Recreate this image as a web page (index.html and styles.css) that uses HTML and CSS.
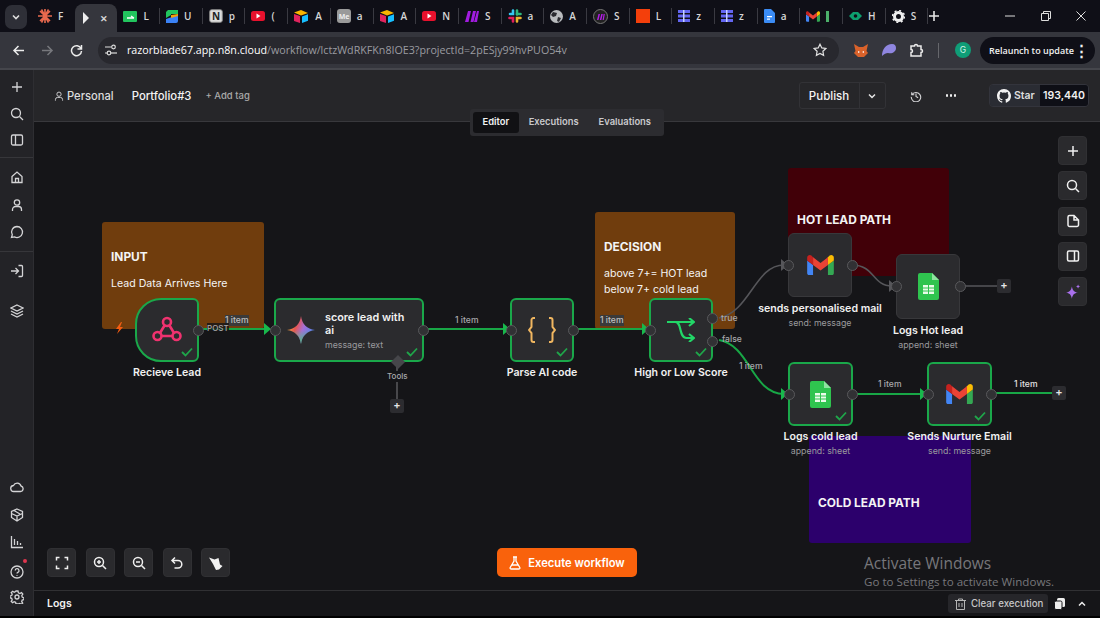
FILE: index.html
```html
<!DOCTYPE html>
<html lang="en">
<head>
  <meta charset="UTF-8" />
  <title>Portfolio#3 - n8n</title>
  <link rel="stylesheet" href="styles.css">
</head>
<body>
  <svg class="defs" width="0" height="0">
    <defs>
      <g id="gmail">
        <path fill="#4285F4" d="M1.6 18H5.3V9L0 5v11.4C0 17.3.7 18 1.6 18z"/>
        <path fill="#34A853" d="M18.7 18h3.7c.9 0 1.6-.7 1.6-1.6V5l-5.3 4z"/>
        <path fill="#FBBC04" d="M18.7 2.1V9L24 5V2.4c0-2-2.3-3.1-3.8-1.9z"/>
        <path fill="#EA4335" d="M5.3 9V2.1L12 7.1l6.7-5V9L12 14z"/>
        <path fill="#C5221F" d="M0 2.4V5l5.3 4V2.1L3.8.5C2.3-.7 0 .4 0 2.4z"/>
      </g>
      <g id="sheets">
        <path fill="#2fc44f" d="M2 0h12l7 7v18a2 2 0 0 1-2 2H2a2 2 0 0 1-2-2V2a2 2 0 0 1 2-2z"/>
        <path fill="#8fe3a0" d="M14 0l7 7h-7z"/>
        <path fill="#e9fbe9" d="M5 12h11v9H5z"/>
        <path stroke="#2fc44f" stroke-width="1" d="M5 15h11M5 18h11M10.5 12v9"/>
      </g>
      <path id="check" d="M1 5l3.5 3.5L11 1.5" fill="none" stroke="#1fa64a" stroke-width="1.8"/>
    </defs>
  </svg>

  <div class="tabstrip">
    <div class="tabs-menu">
      <svg width="10" height="10" viewBox="0 0 10 10"><path d="M2 3.5l3 3 3-3" fill="none" stroke="#ddd" stroke-width="1.6"/></svg>
    </div>
    <div class="tab">
      <svg width="14" height="14" viewBox="0 0 14 14"><g stroke="#e8694e" stroke-width="1.6"><path d="M7 0v14M0 7h14M2 2l10 10M12 2L2 12M3.5 0.5l7 13M10.5 .5l-7 13"/></g></svg>
      <span>F</span>
    </div>
    <div class="tab tab-active">
      <svg width="9" height="12" viewBox="0 0 9 12"><path d="M1 0v12l6-6z" fill="#eee"/></svg>
      <span class="tab-x">✕</span>
    </div>
    <div class="tab">
      <svg width="14" height="11" viewBox="0 0 14 11"><rect width="14" height="11" rx="1" fill="#22c55e"/><path d="M4 7h7M8 5l3 2" stroke="#fff" stroke-width="1.3" fill="none"/></svg>
      <span>L</span>
    </div>
    <div class="tab">
      <svg width="12" height="13" viewBox="0 0 12 13"><path d="M2 0h10v4H5v1L0 8V2z" fill="#22c55e"/><path d="M0 9l12-4v6a2 2 0 0 1-2 2H0z" fill="#3b82f6"/><path d="M5 5l7-1v2l-7 2z" fill="#f59e0b"/></svg>
      <span>U</span>
    </div>
    <div class="tab">
      <svg width="14" height="14" viewBox="0 0 14 14"><rect x=".7" y=".7" width="12.6" height="12.6" rx="2" fill="#ddd" stroke="#888"/><text x="7" y="11" class="fav-text">N</text></svg>
      <span>p</span>
    </div>
    <div class="tab">
      <svg width="14" height="10" viewBox="0 0 14 10"><rect width="14" height="10" rx="2.5" fill="#e8112d"/><path d="M5.5 2.5v5l4-2.5z" fill="#fff"/></svg>
      <span>(</span>
    </div>
    <div class="tab">
      <svg width="15" height="13" viewBox="0 0 15 13"><path d="M7 0l7 3-7 2.500-7-3z" fill="#f8b500"/><path d="M8 6.500l6-2.300v6.500l-6 2.300z" fill="#18bfff"/><path d="M0 4v7l6 2V6z" fill="#e0245e"/></svg>
      <span>A</span>
    </div>
    <div class="tab">
      <svg width="14" height="14" viewBox="0 0 14 14"><rect width="14" height="14" rx="3" fill="#9a9a9a"/><text x="7" y="10" class="fav-text fav-me">Me</text></svg>
      <span>a</span>
    </div>
    <div class="tab">
      <svg width="15" height="13" viewBox="0 0 15 13"><path d="M7 0l7 3-7 2.500-7-3z" fill="#f8b500"/><path d="M8 6.500l6-2.300v6.500l-6 2.300z" fill="#18bfff"/><path d="M0 4v7l6 2V6z" fill="#e0245e"/></svg>
      <span>A</span>
    </div>
    <div class="tab">
      <svg width="14" height="10" viewBox="0 0 14 10"><rect width="14" height="10" rx="2.500" fill="#e8112d"/><path d="M5.500 2.500v5l4-2.500z" fill="#fff"/></svg>
      <span>N</span>
    </div>
    <div class="tab">
      <svg width="14" height="11" viewBox="0 0 14 11"><path d="M3 0h3L3.500 11H0zM8 0h3L8.500 11h-3zM12 0h2l-2 11h-3z" fill="#a21ce0"/></svg>
      <span>S</span>
    </div>
    <div class="tab">
      <svg width="14" height="14" viewBox="0 0 14 14"><g stroke-width="2.600" stroke-linecap="round"><path d="M5 1.500v3.500H2" stroke="#36c5f0" fill="none"/><path d="M9 1.500v4" stroke="#2eb67d"/><path d="M12.500 5H9" stroke="#2eb67d"/><path d="M9 12.500V9h3.500" stroke="#ecb22e" fill="none"/><path d="M1.500 9H5v3.500" stroke="#e01e5a" fill="none"/></g></svg>
      <span>a</span>
    </div>
    <div class="tab">
      <svg width="13" height="13" viewBox="0 0 13 13"><circle cx="6.500" cy="6.500" r="6.500" fill="#b9bbbe"/><path d="M3 2l4 1-1 3-3 1-2-2zM8 7l3 1-2 4-2-1z" fill="#2a2a30"/></svg>
      <span>A</span>
    </div>
    <div class="tab">
      <svg width="15" height="15" viewBox="0 0 15 15"><circle cx="7.500" cy="7.500" r="7" fill="#222" stroke="#777"/><path d="M4 11l1.500-6h1.500l-1.500 6zM6.800 11l1.500-6h1.500l-1.500 6zM9.600 11l1-6h1.200l-1 6z" fill="#b31ce8"/></svg>
      <span>S</span>
    </div>
    <div class="tab">
      <svg width="14" height="14" viewBox="0 0 14 14"><rect width="14" height="14" fill="#f43f0b"/></svg>
      <span>L</span>
    </div>
    <div class="tab">
      <svg width="12" height="12" viewBox="0 0 12 12"><g fill="#6366f1"><rect width="12" height="3"/><rect y="4.500" width="12" height="3"/><rect y="9" width="12" height="3"/></g><path d="M5 0h1.500v12H5z" fill="#c7d2fe"/></svg>
      <span>z</span>
    </div>
    <div class="tab">
      <svg width="12" height="12" viewBox="0 0 12 12"><g fill="#6366f1"><rect width="12" height="3"/><rect y="4.500" width="12" height="3"/><rect y="9" width="12" height="3"/></g><path d="M5 0h1.500v12H5z" fill="#c7d2fe"/></svg>
      <span>z</span>
    </div>
    <div class="tab">
      <svg width="11" height="14" viewBox="0 0 11 14"><path d="M1 0h6l4 4v9a1 1 0 0 1-1 1H1a1 1 0 0 1-1-1V1a1 1 0 0 1 1-1z" fill="#3b8cf5"/><path d="M3 7h5v1.300H3zM3 9.500h3v1.300H3z" fill="#fff"/></svg>
      <span>a</span>
    </div>
    <div class="tab">
      <svg width="14" height="11" viewBox="0 0 24 18"><use href="#gmail"/></svg>
      <span class="tab-bar"></span>
    </div>
    <div class="tab">
      <svg width="13" height="10" viewBox="0 0 13 10"><path d="M0 5l4-4h5l4 4-4 4H4z" fill="#0d9f6e"/><circle cx="6.500" cy="5" r="1.800" fill="#0f0f17"/></svg>
      <span>H</span>
    </div>
    <div class="tab tab-last">
      <svg width="13" height="13" viewBox="0 0 13 13"><circle cx="6.500" cy="6.500" r="4" fill="none" stroke="#eee" stroke-width="3"/><circle cx="6.500" cy="6.500" r="6" fill="none" stroke="#eee" stroke-width="1.500" stroke-dasharray="2 2.700"/></svg>
      <span>S</span>
    </div>
    <div class="tab-new">
      <svg width="12" height="12" viewBox="0 0 12 12"><path d="M6 1v10M1 6h10" stroke="#e6e6e6" stroke-width="1.600"/></svg>
    </div>
    <div class="window-controls">
      <svg width="10" height="10" viewBox="0 0 10 10"><path d="M0 5h10" stroke="#ddd"/></svg>
      <svg width="10" height="10" viewBox="0 0 10 10"><path d="M.5 2.500h7v7h-7zM2.500 2.500v-2h7v7h-2" fill="none" stroke="#ddd"/></svg>
      <svg width="10" height="10" viewBox="0 0 10 10"><path d="M.5.500l9 9M9.500.500l-9 9" stroke="#ddd"/></svg>
    </div>
  </div>

  <div class="toolbar">
    <div class="nav-icons">
      <svg width="13" height="13" viewBox="0 0 13 13"><path d="M12 6.500H2M6.500 2l-4.500 4.500 4.500 4.500" fill="none" stroke="#ececec" stroke-width="1.500"/></svg>
      <svg width="13" height="13" viewBox="0 0 13 13"><path d="M1 6.500h10M6.500 2l4.500 4.500L6.500 11" fill="none" stroke="#77787d" stroke-width="1.500"/></svg>
      <svg width="13" height="13" viewBox="0 0 13 13"><path d="M11 4.500A5 5 0 1 0 11.500 7M11.500 1v4h-4" fill="none" stroke="#ececec" stroke-width="1.500"/></svg>
    </div>
    <div class="address-bar">
      <svg width="12" height="12" viewBox="0 0 12 12"><g fill="none" stroke="#ddd" stroke-width="1.200"><path d="M0 3h6M0 9h2"/><circle cx="8.500" cy="3" r="1.800"/><circle cx="4" cy="9" r="1.800"/><path d="M6 9h6"/></g></svg>
      <span class="url"><b>razorblade67.app.n8n.cloud</b>/workflow/lctzWdRKFKn8IOE3?projectId=2pESjy99hvPUO54v</span>
      <svg class="star" width="14" height="14" viewBox="0 0 14 14"><path d="M7 1.200l1.800 3.700 4 .6-2.900 2.800.7 4L7 10.400l-3.600 1.900.7-4L1.200 5.500l4-.6z" fill="none" stroke="#e2e2e2" stroke-width="1.200"/></svg>
    </div>
    <div class="extensions">
      <svg width="14" height="13" viewBox="0 0 14 13"><path d="M0 0l5 3h4l5-3-1.500 7L14 9l-4 4H4L0 9l1.500-2z" fill="#d9622b"/><path d="M4 7l2 1-2 1zM10 7L8 8l2 1z" fill="#fff"/></svg>
      <svg width="14" height="12" viewBox="0 0 14 12"><path d="M0 12C0 5 4 0 10 0c3 0 4 2 4 4 0 4-4 6-8 5-2 0-4 1-6 3z" fill="#8f86e0"/></svg>
      <svg width="14" height="14" viewBox="0 0 14 14"><path d="M1 3h3.500a1.500 1.500 0 0 1 3 0H11v3.500a1.500 1.500 0 0 1 0 3V13H1V9.500a1.500 1.500 0 0 0 0-3z" fill="none" stroke="#ececec" stroke-width="1.500"/></svg>
      <span class="ext-divider"></span>
      <span class="avatar">G</span>
    </div>
    <div class="relaunch">Relaunch to update<span class="relaunch-dots">⋮</span></div>
  </div>

  <div class="app">
    <nav class="sidebar">
      <div class="side-group">
        <svg width="14" height="14" viewBox="0 0 14 14"><path class="ic" d="M7 2v10M2 7h10"/></svg>
        <svg width="14" height="14" viewBox="0 0 14 14"><circle class="ic" cx="6" cy="6" r="4.500"/><path class="ic" d="M9.500 9.500L13 13"/></svg>
        <svg width="14" height="14" viewBox="0 0 14 14"><rect class="ic" x="1.500" y="2" width="11" height="10" rx="1.500"/><path class="ic" d="M5.500 2v10"/></svg>
      </div>
      <div class="side-group side-line">
        <svg width="14" height="14" viewBox="0 0 14 14"><path class="ic" d="M2 6.500L7 2l5 4.500V12.500H2zM5.500 12.500V8.500h3v4"/></svg>
        <svg width="14" height="14" viewBox="0 0 14 14"><circle class="ic" cx="7" cy="4.500" r="2.700"/><path class="ic" d="M2.500 13v-1.500a3 3 0 0 1 3-3h3a3 3 0 0 1 3 3V13"/></svg>
        <svg width="14" height="14" viewBox="0 0 14 14"><path class="ic" d="M7 1.500a5.500 5.500 0 1 1-2.500 10.400L1.500 12.500l.8-2.800A5.500 5.500 0 0 1 7 1.500z"/></svg>
      </div>
      <div class="side-group side-line side-tight">
        <svg width="14" height="14" viewBox="0 0 14 14"><path class="ic" d="M1 7h7M5.500 4l3 3-3 3M8.500 1.500h3a1 1 0 0 1 1 1v9a1 1 0 0 1-1 1h-3"/></svg>
      </div>
      <div class="side-group side-layers">
        <svg width="14" height="14" viewBox="0 0 14 14"><path class="ic" d="M7 1l6 3-6 3-6-3zM1 7l6 3 6-3M1 10l6 3 6-3"/></svg>
      </div>
      <div class="side-group side-bottom">
        <svg width="14" height="14" viewBox="0 0 14 14"><path class="ic" d="M4 11.500a3 3 0 0 1-.5-6 4 4 0 0 1 7.500.5 2.800 2.800 0 0 1-.5 5.500z"/></svg>
        <svg width="14" height="14" viewBox="0 0 14 14"><path class="ic" d="M7 1l5.500 2.500v6L7 13 1.500 9.500v-6zM1.500 5.500L7 8l5.500-2.500M7 8v5M4 2.500L10 6"/></svg>
        <svg width="14" height="14" viewBox="0 0 14 14"><path class="ic" d="M1.500 1v11.500H13M4.500 10V4M7.500 10V6M10.500 10V8"/></svg>
        <div class="help">
          <svg width="14" height="14" viewBox="0 0 14 14"><circle class="ic" cx="7" cy="7" r="6"/><path class="ic" d="M5.200 5.500a1.900 1.900 0 1 1 2.700 1.800c-.6.300-.9.700-.9 1.300M7 10v.8"/></svg>
          <span class="help-dot"></span>
        </div>
        <svg width="14" height="14" viewBox="0 0 14 14"><circle class="ic" cx="7" cy="7" r="2"/><path class="ic" d="M6 1h2l.4 1.800 1.500.7 1.600-.9 1.300 1.500-1 1.500.4 1.500 1.700.7v1.800l-1.700.5-.5 1.500 1 1.500-1.500 1.300-1.500-1-1.500.6L8 14H6l-.4-1.700-1.500-.6-1.500 1L1.200 11.300l1-1.500-.5-1.500L0 7.700V6l1.700-.5.500-1.500-1-1.500L2.700 1.200l1.500 1 1.400-.6z"/></svg>
      </div>
    </nav>

    <main class="workspace">
      <header class="topbar">
        <div class="crumbs">
          <svg width="10" height="10" viewBox="0 0 14 14"><circle class="ic" cx="7" cy="4.500" r="3"/><path class="ic" d="M2 13.500v-1.500a3 3 0 0 1 3-3h4a3 3 0 0 1 3 3v1.500"/></svg>
          <span class="crumb-project">Personal</span>
          <span class="crumb-name">Portfolio#3</span>
          <span class="add-tag">+ Add tag</span>
        </div>
        <div class="top-actions">
          <div class="publish">
            <span class="publish-label">Publish</span>
            <span class="publish-more"><svg width="10" height="10" viewBox="0 0 10 10"><path d="M2 3.500l3 3 3-3" fill="none" stroke="#e6e6e6" stroke-width="1.500"/></svg></span>
          </div>
          <svg class="history" width="12" height="12" viewBox="0 0 14 14"><path class="ic" d="M2 2.500v3h3M2.300 5.500A5.500 5.500 0 1 1 1.500 8M7 4v3.500l2.500 1.500"/></svg>
          <span class="more-dots"><i></i><i></i><i></i></span>
          <div class="github">
            <span class="github-star">
              <svg width="14" height="14" viewBox="0 0 16 16"><path fill="#f2f2f2" d="M8 0C3.580 0 0 3.580 0 8c0 3.540 2.290 6.530 5.470 7.590.4.070.55-.17.55-.38v-1.340c-2.230.48-2.700-1.070-2.700-1.070-.36-.92-.89-1.170-.89-1.170-.73-.5.050-.49.050-.49.800.06 1.230.82 1.230.82.720 1.220 1.870.87 2.320.67.070-.52.280-.87.510-1.070-1.780-.2-3.640-.89-3.640-3.950 0-.87.310-1.590.820-2.150-.08-.2-.36-1.020.080-2.120 0 0 .67-.21 2.200.82a7.700 7.700 0 0 1 4 0c1.530-1.040 2.200-.82 2.200-.82.440 1.100.160 1.920.080 2.120.51.560.82 1.270.82 2.150 0 3.070-1.870 3.750-3.650 3.950.29.250.54.730.54 1.480v2.190c0 .21.150.46.550.38A8 8 0 0 0 16 8c0-4.420-3.580-8-8-8z"/></svg>
              Star
            </span>
            <span class="github-count">193,440</span>
          </div>
        </div>
      </header>

      <div class="canvas">
        <div class="view-tabs">
          <span class="view-tab view-tab-on">Editor</span>
          <span class="view-tab">Executions</span>
          <span class="view-tab">Evaluations</span>
        </div>

        <div class="sticky sticky-input">
          <h4>INPUT</h4>
          <p>Lead Data Arrives Here</p>
        </div>
        <div class="sticky sticky-decision">
          <h4>DECISION</h4>
          <p>above 7+= HOT lead<br>below 7+ cold lead</p>
        </div>
        <div class="sticky sticky-hot"><h4>HOT LEAD PATH</h4></div>
        <div class="sticky sticky-cold"><h4>COLD LEAD PATH</h4></div>

        <svg class="edges" viewBox="34 122 1066 468">
          <g class="edge-green">
            <path d="M199 329H266"/>
            <path d="M424 329H506"/>
            <path d="M573 329H645"/>
            <path d="M719 340C750 345 752 394 784 394"/>
            <path d="M853 394H923"/>
            <path d="M992 393H1052"/>
          </g>
          <g class="edge-grey">
            <path d="M719 318C750 312 755 265 784 265"/>
            <path d="M852 265C875 265 872 286 892 286"/>
            <path d="M960 286H998"/>
            <path d="M397 361V400"/>
          </g>
          <g class="arrow-green">
            <path d="M264 323l7 6-7 6z"/>
            <path d="M503 323l7 6-7 6z"/>
            <path d="M642 323l7 6-7 6z"/>
            <path d="M781 388l7 6-7 6z"/>
            <path d="M920 388l7 6-7 6z"/>
          </g>
          <g class="arrow-grey">
            <path d="M781 259l7 6-7 6z"/>
            <path d="M889 280l7 6-7 6z"/>
          </g>
          <path class="bolt" d="M121 322l-5 7h3l-2 5 6-7h-3l2-5z"/>
        </svg>

        <span class="edge-label label-a">1 item</span>
        <span class="edge-label edge-post">POST</span>
        <span class="edge-label label-b">1 item</span>
        <span class="edge-label label-c">1 item</span>
        <span class="edge-label edge-true">true</span>
        <span class="edge-label edge-false">false</span>
        <span class="edge-label label-d">1 item</span>
        <span class="edge-label label-e">1 item</span>
        <span class="edge-label label-f">1 item</span>
        <span class="edge-label edge-tools">Tools</span>

        <div class="node node-webhook ok">
          <svg width="30" height="30" viewBox="0 0 30 30"><g fill="none" stroke="#f0326f" stroke-width="2.600" stroke-linecap="round"><circle cx="15" cy="7" r="4"/><circle cx="5.500" cy="21" r="4"/><circle cx="24.500" cy="21" r="4"/><path d="M12.500 10.500L8 18M17.500 10.500L22 18M10 21h10"/></g></svg>
          <svg class="tick" width="12" height="10" viewBox="0 0 12 10"><use href="#check"/></svg>
          <div class="node-label"><b>Recieve Lead</b></div>
          <span class="handle handle-out"></span>
        </div>

        <div class="node node-score ok">
          <svg class="gemini" width="28" height="28" viewBox="0 0 28 28">
            <defs>
              <linearGradient id="gem" x1="0" y1="0.300" x2="1" y2="0.700">
                <stop offset="0" stop-color="#f5c33b"/>
                <stop offset="0.300" stop-color="#e8554e"/>
                <stop offset="0.550" stop-color="#a56fd6"/>
                <stop offset="1" stop-color="#3f8cf3"/>
              </linearGradient>
              <linearGradient id="gem2" x1="0" y1="0" x2="0" y2="1">
                <stop offset="0.500" stop-color="#4bbf73" stop-opacity="0"/>
                <stop offset="1" stop-color="#4bbf73"/>
              </linearGradient>
            </defs>
            <path fill="url(#gem)" d="M14 0c1 8 6 13 14 14-8 1-13 6-14 14-1-8-6-13-14-14 8-1 13-6 14-14z"/>
            <path fill="url(#gem2)" d="M14 0c1 8 6 13 14 14-8 1-13 6-14 14-1-8-6-13-14-14 8-1 13-6 14-14z"/>
          </svg>
          <div class="score-text">
            <b>score lead with ai</b>
            <small>message: text</small>
          </div>
          <svg class="tick" width="12" height="10" viewBox="0 0 12 10"><use href="#check"/></svg>
          <span class="handle handle-in"></span>
          <span class="handle handle-out"></span>
          <span class="diamond"></span>
        </div>

        <div class="node node-parse ok">
          <svg width="28" height="26" viewBox="0 0 28 26"><g fill="none" stroke="#f0b660" stroke-width="2"><path d="M7 1H5.500a2 2 0 0 0-2 2v7l-2.500 3 2.500 3v7a2 2 0 0 0 2 2H7"/><path d="M21 1h1.500a2 2 0 0 1 2 2v7l2.500 3-2.500 3v7a2 2 0 0 1-2 2H21"/></g></svg>
          <svg class="tick" width="12" height="10" viewBox="0 0 12 10"><use href="#check"/></svg>
          <div class="node-label"><b>Parse AI code</b></div>
          <span class="handle handle-in"></span>
          <span class="handle handle-out"></span>
        </div>

        <div class="node node-if ok">
          <svg width="28" height="24" viewBox="0 0 28 24"><g fill="none" stroke="#22d667" stroke-width="2.200"><path d="M0 4H27M22 0l5 4-5 4"/><path d="M8 4c4 0 4.500 4 5.500 8s2 8 6 8H27M22 16l5 4-5 4"/></g></svg>
          <svg class="tick" width="12" height="10" viewBox="0 0 12 10"><use href="#check"/></svg>
          <div class="node-label"><b>High or Low Score</b></div>
          <span class="handle handle-in"></span>
          <span class="handle handle-true"></span>
          <span class="handle handle-false"></span>
        </div>

        <div class="node node-mail-hot">
          <svg width="27" height="20" viewBox="0 0 24 18"><use href="#gmail"/></svg>
          <div class="node-label"><b>sends personalised mail</b><small>send: message</small></div>
          <span class="handle handle-in"></span>
          <span class="handle handle-out"></span>
        </div>

        <div class="node node-sheet-hot">
          <svg width="21" height="27" viewBox="0 0 21 27"><use href="#sheets"/></svg>
          <div class="node-label"><b>Logs Hot lead</b><small>append: sheet</small></div>
          <span class="handle handle-in"></span>
          <span class="handle handle-out"></span>
        </div>

        <div class="node node-sheet-cold ok">
          <svg width="21" height="27" viewBox="0 0 21 27"><use href="#sheets"/></svg>
          <svg class="tick" width="12" height="10" viewBox="0 0 12 10"><use href="#check"/></svg>
          <div class="node-label"><b>Logs cold lead</b><small>append: sheet</small></div>
          <span class="handle handle-in"></span>
          <span class="handle handle-out"></span>
        </div>

        <div class="node node-mail-cold ok">
          <svg width="27" height="20" viewBox="0 0 24 18"><use href="#gmail"/></svg>
          <svg class="tick" width="12" height="10" viewBox="0 0 12 10"><use href="#check"/></svg>
          <div class="node-label"><b>Sends Nurture Email</b><small>send: message</small></div>
          <span class="handle handle-in"></span>
          <span class="handle handle-out"></span>
        </div>

        <span class="plus plus-tools">+</span>
        <span class="plus plus-hot">+</span>
        <span class="plus plus-cold">+</span>

        <div class="canvas-side">
          <button class="tool"><svg width="14" height="14" viewBox="0 0 14 14"><path class="ic ic-w" d="M7 2v10M2 7h10"/></svg></button>
          <button class="tool"><svg width="14" height="14" viewBox="0 0 14 14"><circle class="ic ic-w" cx="6" cy="6" r="4.500"/><path class="ic ic-w" d="M9.500 9.500L13 13"/></svg></button>
          <button class="tool"><svg width="14" height="14" viewBox="0 0 14 14"><path class="ic ic-w" d="M2 3a1.500 1.500 0 0 1 1.500-1.500H8L12.500 6v5a1.500 1.500 0 0 1-1.500 1.500H3.500A1.500 1.500 0 0 1 2 11zM8 1.500V6h4.500"/></svg></button>
          <button class="tool"><svg width="14" height="14" viewBox="0 0 14 14"><rect class="ic ic-w" x="1.500" y="2" width="11" height="10" rx="1.500"/><path class="ic ic-w" d="M8.500 2v10"/></svg></button>
          <button class="tool"><svg width="18" height="18" viewBox="0 0 16 16"><path fill="#a970ec" d="M7 3c.6 3.500 2 5 5.500 5.500C9 9 7.600 10.500 7 14c-.6-3.500-2-5-5.500-5.500C5 8 6.400 6.500 7 3z"/><path fill="#a970ec" d="M12.500 1c.2 1.300.7 1.800 2 2-1.300.2-1.800.7-2 2-.2-1.300-.7-1.800-2-2 1.300-.2 1.800-.7 2-2z"/></svg></button>
        </div>

        <div class="canvas-tools">
          <button class="tool"><svg width="14" height="14" viewBox="0 0 14 14"><path class="ic ic-w" d="M1.500 4.500v-3h3M9.500 1.500h3v3M12.500 9.500v3h-3M4.500 12.500h-3v-3"/></svg></button>
          <button class="tool"><svg width="14" height="14" viewBox="0 0 14 14"><circle class="ic ic-w" cx="6" cy="6" r="4.500"/><path class="ic ic-w" d="M9.500 9.500L13 13M4 6h4M6 4v4"/></svg></button>
          <button class="tool"><svg width="14" height="14" viewBox="0 0 14 14"><circle class="ic ic-w" cx="6" cy="6" r="4.500"/><path class="ic ic-w" d="M9.500 9.500L13 13M4 6h4"/></svg></button>
          <button class="tool"><svg width="14" height="14" viewBox="0 0 14 14"><path class="ic ic-w" d="M5 1.500L2 4.500l3 3M2 4.500h6a3.800 3.800 0 0 1 0 7.600H4.500"/></svg></button>
          <button class="tool"><svg width="16" height="16" viewBox="0 0 16 16"><path fill="#f2f2f2" d="M1 2.500l5.500 2 4-1.500 1.500 6.500 2.500 1.500-3.500 3.500-3 .5-3-6z"/></svg></button>
        </div>

        <button class="execute">
          <svg width="12" height="14" viewBox="0 0 12 14"><path d="M4 1h4M5 1v4L1.200 11.500A1 1 0 0 0 2 13h8a1 1 0 0 0 .8-1.500L7 5V1M3 9h6" fill="none" stroke="#fff" stroke-width="1.300"/></svg>
          Execute workflow
        </button>

        <div class="activate">
          <div class="activate-title">Activate Windows</div>
          <div class="activate-sub">Go to Settings to activate Windows.</div>
        </div>
      </div>

      <footer class="logs">
        <span class="logs-title">Logs</span>
        <div class="logs-actions">
          <span class="clear-exec">
            <svg width="11" height="12" viewBox="0 0 11 12"><path d="M0 2.500h11M3.500 2.500V1h4v1.500M1.500 2.500V11.500h8V2.500M4 5v4M7 5v4" fill="none" stroke="#b5b5b5" stroke-width="1"/></svg>
            Clear execution
          </span>
          <svg width="11" height="12" viewBox="0 0 11 12"><rect x="3" y="0" width="8" height="9" rx="1.500" fill="#eee"/><rect x=".5" y="3" width="7.500" height="8.500" rx="1.500" fill="#eee" stroke="#151518"/></svg>
          <svg width="10" height="10" viewBox="0 0 10 10"><path d="M2 6.500l3-3 3 3" fill="none" stroke="#eee" stroke-width="1.500"/></svg>
        </div>
      </footer>
    </main>
  </div>
</body>
</html>
```
FILE: styles.css
```css
* {
  box-sizing: border-box;
}

html, body {
  margin: 0;
  height: 100%;
  overflow: hidden;
}

body {
  width: 1100px;
  height: 618px;
  display: flex;
  flex-direction: column;
  background: #000;
  color: #f1f1f1;
  font-family: Inter, "Liberation Sans", sans-serif;
}

.defs {
  position: absolute;
}

/* browser chrome */
.tabstrip {
  height: 32px;
  display: flex;
  align-items: center;
  background: #0f0f17;
  padding-left: 5px;
  font-family: "Open Sans", sans-serif;
}

.tabs-menu {
  width: 22px;
  height: 24px;
  margin-right: 5px;
  margin-top: 1px;
  border-radius: 7px;
  background: #2e2f37;
  display: flex;
  align-items: center;
  justify-content: center;
}

.tab {
  width: 42.7px;
  height: 16px;
  padding-left: 6px;
  display: flex;
  align-items: center;
  gap: 6px;
  border-right: 1px solid #3a3a42;
  font-size: 10px;
  font-weight: 600;
  color: #d6d6d6;
}

.tab:nth-child(2) {
  border-right: 0;
}

.tab svg {
  flex: none;
}

.tab-active {
  height: 28px;
  margin-top: 4px;
  padding-left: 7px;
  gap: 9px;
  border: 0;
  border-radius: 8px 8px 0 0;
  background: #35363d;
}

.tab-x {
  font-size: 9px;
}

.tab-bar {
  width: 3px;
  height: 11px;
  background: #4caf6a;
}

.tab-last {
  border-right: 1px solid #3a3a42;
}

.fav-text {
  font-size: 10px;
  font-weight: 700;
  fill: #222;
  text-anchor: middle;
}

.fav-me {
  font-size: 7px;
  fill: #eee;
}

.tab-new {
  width: 13px;
  margin-left: 0;
  display: flex;
}

.window-controls {
  margin-left: auto;
  width: 95px;
  padding-right: 14px;
  display: flex;
  justify-content: space-between;
}

.toolbar {
  height: 38px;
  display: flex;
  align-items: center;
  background: #35363d;
  border-bottom: 2px solid #45464c;
  padding: 0 5px 0 12px;
}

.nav-icons {
  width: 85px;
  display: flex;
  gap: 16px;
}

.address-bar {
  width: 741px;
  height: 27px;
  margin-left: 1px;
  padding: 0 12px 0 7px;
  border-radius: 14px;
  background: #28282e;
  display: flex;
  align-items: center;
  gap: 10px;
  font-family: "Open Sans", sans-serif;
  font-size: 10.7px;
  color: #9b9ca1;
}

.url b {
  font-weight: 500;
  color: #fff;
}

.star {
  margin-left: auto;
}

.extensions {
  width: 137px;
  padding-left: 15px;
  display: flex;
  align-items: center;
  gap: 14px;
}

.ext-divider {
  width: 1px;
  height: 15px;
  margin: 0 2px 0 0;
  background: #66676c;
}

.avatar {
  width: 16px;
  height: 16px;
  border-radius: 50%;
  background: #0f9d77;
  color: #d9f5ea;
  font-size: 8.5px;
  text-align: center;
  line-height: 16px;
}

.relaunch {
  width: 115px;
  height: 27px;
  margin-left: auto;
  padding-left: 9px;
  border-radius: 14px;
  background: #0f0f17;
  display: flex;
  align-items: center;
  justify-content: space-between;
  font-family: "Open Sans", sans-serif;
  font-size: 9px;
  font-weight: 600;
  white-space: nowrap;
}

.relaunch-dots {
  font-size: 15px;
  font-weight: 700;
  padding-right: 9px;
}

/* n8n app */
.app {
  flex: none;
  height: 546px;
  display: flex;
  background: #151518;
}

.ic {
  fill: none;
  stroke: #d4d4d6;
  stroke-width: 1.3;
}

.ic-w {
  stroke: #f0f0f0;
  stroke-width: 1.5;
}

.sidebar {
  width: 34px;
  flex: none;
  display: flex;
  flex-direction: column;
  align-items: stretch;
  background: #232327;
  border-right: 1px solid #2e2e32;
}

.side-group {
  display: flex;
  flex-direction: column;
  align-items: center;
  gap: 12.5px;
  padding: 10px 0 10px;
}

.side-line {
  border-top: 1px solid #36363a;
  padding: 12px 0;
  gap: 13.5px;
}

.side-tight {
  padding-bottom: 0;
}

.side-layers {
  padding: 26px 0 0;
}

.side-bottom {
  margin-top: auto;
  padding-bottom: 12px;
  gap: 13.5px;
}

.help {
  position: relative;
  height: 14px;
}

.help-dot {
  position: absolute;
  top: -4px;
  right: -3px;
  width: 4px;
  height: 4px;
  border-radius: 50%;
  background: #e0364f;
}

.workspace {
  flex: 1;
  min-width: 0;
  display: flex;
  flex-direction: column;
}

.topbar {
  height: 52px;
  flex: none;
  display: flex;
  align-items: center;
  justify-content: space-between;
  padding: 0 11px 0 20px;
  background: #262629;
  border-bottom: 1px solid #38383c;
}

.crumbs {
  display: flex;
  align-items: center;
  font-size: 11.2px;
  font-weight: 500;
}

.crumb-project {
  margin-left: 3px;
  color: #dcdcdc;
}

.crumb-name {
  margin-left: 18px;
  font-size: 11.3px;
  color: #f4f4f4;
}

.add-tag {
  margin-left: 14px;
  font-size: 9.5px;
  color: #aaa;
}

.top-actions {
  display: flex;
  align-items: center;
}

.publish {
  display: flex;
  height: 27px;
  border: 1px solid #323236;
  border-radius: 3px;
  font-size: 11.5px;
  font-weight: 500;
  color: #f4f4f4;
}

.publish-label {
  width: 60px;
  text-align: center;
  line-height: 27px;
  border-right: 1px solid #323236;
}

.publish-more {
  width: 25px;
  display: flex;
  align-items: center;
  justify-content: center;
}

.history {
  margin-left: 24px;
}

.more-dots {
  margin-left: 24px;
  display: flex;
  gap: 1.5px;
}

.more-dots i {
  width: 2.5px;
  height: 2.5px;
  border-radius: 50%;
  background: #eee;
}

.github {
  margin-left: 33px;
  width: 100px;
  height: 23px;
  display: flex;
  border: 1px solid #33343c;
  border-radius: 4px;
  overflow: hidden;
  font-size: 10.5px;
  font-weight: 600;
}

.github-star {
  width: 50px;
  padding-left: 7px;
  display: flex;
  align-items: center;
  gap: 3px;
  background: #2a2c33;
  color: #ddd;
}

.github-count {
  flex: 1;
  text-align: center;
  line-height: 21px;
  background: #0e0f16;
}

.canvas {
  position: relative;
  flex: 1;
  background: #151518;
}

.view-tabs {
  position: absolute;
  left: 436px;
  top: -13px;
  width: 194px;
  height: 27px;
  padding: 3px;
  display: flex;
  background: #2c2c30;
  border-radius: 3px;
  font-size: 9.4px;
  font-weight: 600;
  color: #c9c9cc;
  z-index: 5;
}

.view-tab {
  padding: 0 10px;
  line-height: 20px;
}

.view-tab-on {
  width: 46px;
  padding: 0;
  text-align: center;
  background: #111114;
  border-radius: 3px;
  color: #f2f2f2;
}

.sticky {
  position: absolute;
  border-radius: 3px;
  padding-left: 9px;
  color: #f4f4f4;
}

.sticky h4 {
  margin: 0;
  font-size: 11.9px;
  line-height: 14px;
  font-weight: 700;
}

.sticky p {
  margin: 12px 0 0;
  font-size: 10.6px;
  line-height: 16px;
  font-weight: 400;
}

.sticky-input {
  left: 68px;
  top: 100px;
  width: 162px;
  height: 107px;
  padding-top: 28px;
  background: #703d0d;
}

.sticky-decision {
  left: 561px;
  top: 90px;
  width: 140px;
  height: 117px;
  padding-top: 28px;
  background: #703d0d;
}

.sticky-hot {
  left: 754px;
  top: 46px;
  width: 161px;
  height: 108px;
  padding-top: 45px;
  background: #410008;
}

.sticky-cold {
  left: 775px;
  top: 314px;
  width: 162px;
  height: 107px;
  padding-top: 60px;
  background: #2c006c;
}

.edges {
  position: absolute;
  left: 0;
  top: 0;
  width: 1066px;
  height: 468px;
}

.edge-green path {
  fill: none;
  stroke: #18a746;
  stroke-width: 2;
}

.edge-grey path {
  fill: none;
  stroke: #56565a;
  stroke-width: 1.6;
}

.arrow-green path {
  fill: #18b84c;
}

.arrow-grey path {
  fill: #56565a;
}

.bolt {
  fill: #f25c12;
}

.edge-label {
  position: absolute;
  font-size: 8.6px;
  line-height: 11px;
  font-weight: 500;
  color: #a9a9ac;
  z-index: 3;
}

.label-a {
  left: 191px;
  top: 193px;
  background: #3a3a3a;
  color: #c0c0c0;
}

.edge-post {
  left: 173px;
  top: 201px;
  font-size: 8px;
  background: #151518cc;
}

.label-b {
  left: 421px;
  top: 193px;
}

.label-c {
  left: 566px;
  top: 193px;
  background: #3a3a3a;
  color: #c0c0c0;
}

.edge-true {
  left: 687px;
  top: 191px;
}

.edge-false {
  left: 688px;
  top: 212px;
}

.label-d {
  left: 705px;
  top: 239px;
}

.label-e {
  left: 844px;
  top: 257px;
}

.label-f {
  left: 980px;
  top: 257px;
  color: #e4e4e4;
}

.edge-tools {
  left: 353px;
  top: 249px;
  font-size: 8px;
  background: #151518;
}

.node {
  position: absolute;
  width: 64px;
  height: 64px;
  display: flex;
  align-items: center;
  justify-content: center;
  background: #2b2b2e;
  border: 1px solid #38383b;
  border-radius: 6px;
  z-index: 2;
}

.ok {
  border: 2px solid #1aa84a;
}

.node-webhook {
  left: 101px;
  top: 176px;
  border-radius: 26px 6px 6px 26px;
}

.node-score {
  left: 240px;
  top: 176px;
  width: 150px;
  justify-content: flex-start;
  padding-left: 11px;
}

.score-text {
  margin-left: 10px;
  width: 84px;
}

.score-text b {
  display: block;
  font-size: 10.8px;
  line-height: 13px;
  font-weight: 600;
}

.score-text small {
  display: block;
  margin-top: 2px;
  font-size: 8.8px;
  color: #9a9a9d;
}

.node-parse {
  left: 476px;
  top: 176px;
}

.node-if {
  left: 615px;
  top: 176px;
}

.node-mail-hot {
  left: 754px;
  top: 111px;
}

.node-sheet-hot {
  left: 862px;
  top: 132px;
  height: 65px;
}

.node-sheet-cold {
  left: 754px;
  top: 240px;
  width: 65px;
}

.node-mail-cold {
  left: 893px;
  top: 240px;
  width: 65px;
}

.tick {
  position: absolute;
  right: 4px;
  bottom: 3px;
}

.node-label {
  position: absolute;
  top: calc(100% + 6px);
  left: 50%;
  transform: translateX(-50%);
  text-align: center;
  white-space: nowrap;
}

.node-label b {
  display: block;
  font-size: 10.6px;
  line-height: 14px;
  font-weight: 600;
}

.node-label small {
  display: block;
  margin-top: 1px;
  font-size: 8.8px;
  line-height: 12px;
  color: #9a9a9d;
}

.handle {
  position: absolute;
  width: 11px;
  height: 11px;
  border-radius: 50%;
  background: #313134;
  border: 1px solid #59595c;
  top: 50%;
  margin-top: -5.5px;
}

.handle-in {
  left: -6.5px;
}

.handle-out {
  right: -6.5px;
}

.handle-true {
  right: -6.5px;
  top: 18px;
}

.handle-false {
  right: -6.5px;
  top: 41px;
}

.diamond {
  position: absolute;
  left: 116.5px;
  bottom: -7px;
  width: 10px;
  height: 10px;
  background: #46464a;
  transform: rotate(45deg);
}

.plus {
  position: absolute;
  width: 14px;
  height: 14px;
  border-radius: 2px;
  background: #2c2c30;
  color: #e6e6e6;
  font-size: 11px;
  font-weight: 600;
  line-height: 13px;
  text-align: center;
  z-index: 3;
}

.plus-tools {
  left: 356px;
  top: 277px;
}

.plus-hot {
  left: 963px;
  top: 157px;
}

.plus-cold {
  left: 1018px;
  top: 264px;
}

.canvas-side {
  position: absolute;
  left: 1024px;
  top: 14px;
  display: flex;
  flex-direction: column;
  gap: 6.3px;
}

.canvas-tools {
  position: absolute;
  left: 13px;
  top: 426px;
  display: flex;
  gap: 9.5px;
}

.tool {
  width: 29px;
  height: 29px;
  padding: 0;
  display: flex;
  align-items: center;
  justify-content: center;
  background: #2a2a2d;
  border: 1px solid #303033;
  border-radius: 4px;
}

.execute {
  position: absolute;
  left: 463px;
  top: 426px;
  width: 140px;
  height: 29px;
  padding: 0;
  display: flex;
  align-items: center;
  justify-content: center;
  gap: 7px;
  border: 0;
  border-radius: 5px;
  background: #f9620c;
  color: #fff;
  font-family: Inter, sans-serif;
  font-size: 11.2px;
  font-weight: 600;
}

.activate {
  position: absolute;
  left: 830px;
  top: 431px;
  font-family: "Open Sans", sans-serif;
  color: #77777b;
}

.activate-title {
  font-size: 15.5px;
  line-height: 21px;
}

.activate-sub {
  font-size: 11.6px;
  line-height: 15px;
}

.logs {
  height: 26px;
  flex: none;
  display: flex;
  align-items: center;
  justify-content: space-between;
  padding: 0 13px 0 13px;
  background: #151518;
  border-top: 1px solid #303033;
}

.logs-title {
  font-size: 10.5px;
  font-weight: 600;
}

.logs-actions {
  display: flex;
  align-items: center;
  gap: 6px;
}

.clear-exec {
  width: 100px;
  height: 19px;
  padding-left: 7px;
  display: flex;
  align-items: center;
  gap: 5px;
  background: #26262a;
  border-radius: 3px;
  font-size: 9.7px;
  font-weight: 500;
  color: #c6c6c8;
  white-space: nowrap;
}

.clear-exec svg {
  flex: none;
}

.logs-actions > svg:last-child {
  margin-left: 6px;
}
```
